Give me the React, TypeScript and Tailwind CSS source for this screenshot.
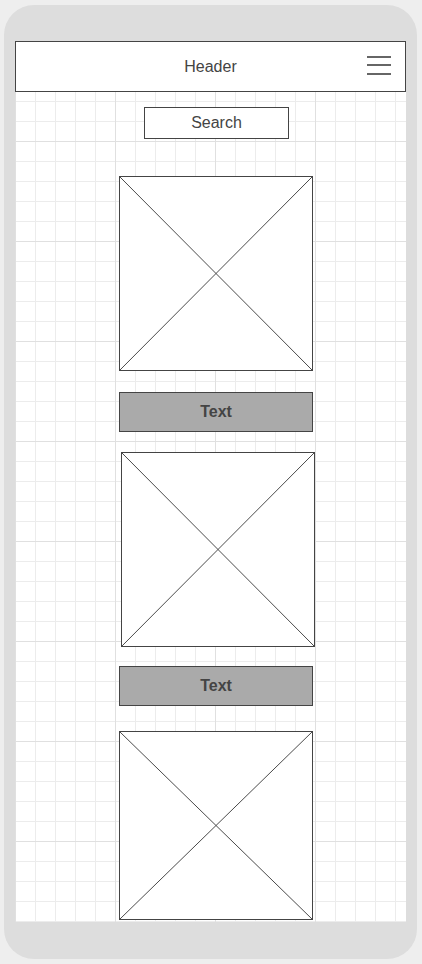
import React from "react";

function Placeholder({ className }: { className: string }) {
  return (
    <div className={`relative shrink-0 border border-[#444] bg-white ${className}`}>
      <svg className="absolute inset-0 h-full w-full" preserveAspectRatio="none" viewBox="0 0 100 100">
        <line x1="0" y1="0" x2="100" y2="100" stroke="#4a4a4a" strokeWidth="1" vectorEffect="non-scaling-stroke" />
        <line x1="100" y1="0" x2="0" y2="100" stroke="#4a4a4a" strokeWidth="1" vectorEffect="non-scaling-stroke" />
      </svg>
    </div>
  );
}

function TextBar({ className }: { className: string }) {
  return (
    <div
      className={`flex h-[40px] w-[194px] shrink-0 items-center justify-center border border-[#444] bg-[#aaaaaa] text-[16px] font-bold text-[#444] ${className}`}
    >
      Text
    </div>
  );
}

export default function App() {
  return (
    <div
      className="h-[964px] w-[422px] overflow-hidden bg-[#eeeeee] pl-[4px] pt-[5px]"
      style={{ fontFamily: '"Liberation Sans", Arial, sans-serif' }}
    >
      <div className="h-[954px] w-[413px] rounded-[30px] bg-[#dddddd] px-[11px] pt-[36px]">
        <div className="flex h-[881px] w-[391px] flex-col overflow-hidden bg-white bg-[image:linear-gradient(to_right,#e0e0e0_1px,transparent_1px),linear-gradient(to_bottom,#e0e0e0_1px,transparent_1px),linear-gradient(to_right,#ececec_1px,transparent_1px),linear-gradient(to_bottom,#ececec_1px,transparent_1px)] bg-[size:100px_100px,100px_100px,20px_20px,20px_20px]">
          <div className="grid h-[51px] shrink-0 grid-cols-[1fr_auto_1fr] items-center border border-[#444] bg-white">
            <div />
            <div className="text-[16px] text-[#444]">Header</div>
            <div className="flex justify-end pr-[14px]">
              <div className="mb-[3px] flex w-[24px] flex-col gap-[6.5px]">
                <div className="h-[2px] bg-[#666]" />
                <div className="h-[2px] bg-[#666]" />
                <div className="h-[2px] bg-[#666]" />
              </div>
            </div>
          </div>
          <div className="flex flex-col items-start">
            <div className="ml-[129px] mt-[15px] flex h-[32px] w-[145px] items-center justify-center border border-[#444] bg-white text-[16px] text-[#444]">
              Search
            </div>
            <Placeholder className="ml-[104px] mt-[37px] h-[195px] w-[194px]" />
            <TextBar className="ml-[104px] mt-[21px]" />
            <Placeholder className="ml-[106px] mt-[20px] h-[195px] w-[194px]" />
            <TextBar className="ml-[104px] mt-[19px]" />
            <Placeholder className="ml-[104px] mt-[25px] h-[189px] w-[194px]" />
          </div>
        </div>
      </div>
    </div>
  );
}
